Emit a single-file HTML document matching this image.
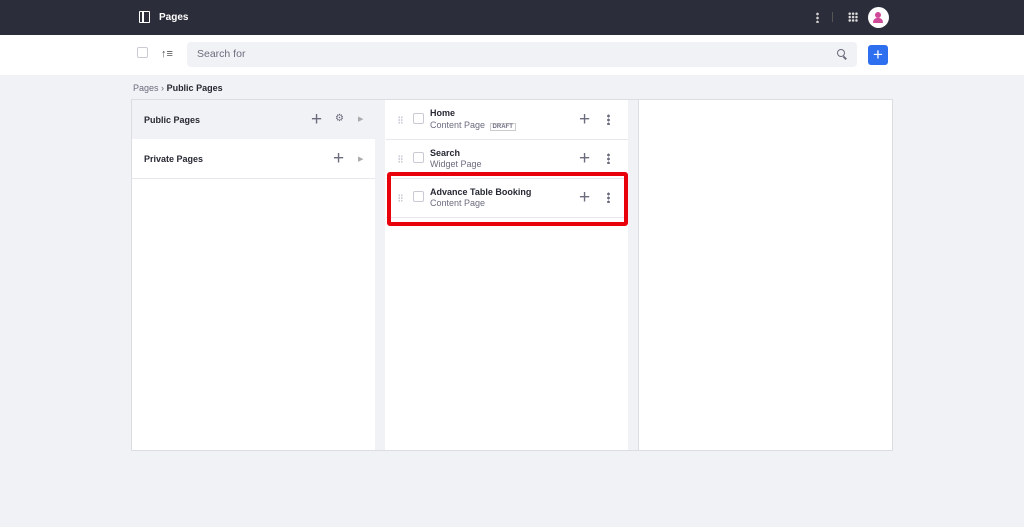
<!DOCTYPE html>
<html><head><style>
*{box-sizing:border-box;margin:0;padding:0}
body{width:1024px;height:527px;background:#f1f2f5;font-family:"Liberation Sans",sans-serif;position:relative;overflow:hidden;color:#272833}
.a{position:absolute}
.top{left:0;top:0;width:1024px;height:35px;background:#2c2d3a}
.tb{left:0;top:35px;width:1024px;height:40px;background:#fff}
.b{font-weight:bold}
.sm{font-size:9px}
.g{color:#6b6c7e}
.cb{width:11px;height:11px;border:1px solid #c9cad3;border-radius:2px;background:#fff}
.plus{font-size:19px;color:#6b6c7e;line-height:1}
.dots{width:3px;height:11px;background:radial-gradient(circle,#6b6c7e 1.3px,transparent 1.5px) 0 0/3px 4px repeat-y}
.drag{width:5px;height:8px;background:radial-gradient(circle,#c9cad3 0.8px,transparent 1px) 0 0/2.5px 2.7px}
</style></head><body>
<div class="a top"></div>
<div class="a" style="left:139px;top:11px;width:11px;height:12px;border:1.5px solid #fff;border-radius:1px"></div>
<div class="a" style="left:142px;top:11px;width:1.5px;height:12px;background:#fff"></div>
<div class="a b" style="left:159px;top:12px;color:#fff;font-size:10px">Pages</div>
<div class="a" style="left:816px;top:12px;width:3px;height:11px;background:radial-gradient(circle,#ccc 1.2px,transparent 1.5px) 0 0/3px 4px repeat-y"></div>
<div class="a" style="left:832px;top:12px;width:1px;height:10px;background:#555"></div>
<div class="a" style="left:848px;top:12px;width:10px;height:10px;background:radial-gradient(circle,#ddd 1.2px,transparent 1.4px) 0 0/3.4px 3.4px"></div>
<div class="a" style="left:868px;top:7px;width:21px;height:21px;border-radius:50%;background:#fff"></div>
<div class="a" style="left:875px;top:12px;width:6px;height:6px;border-radius:50%;background:#d04a9a"></div>
<div class="a" style="left:873px;top:18px;width:10px;height:5px;border-radius:5px 5px 1px 1px;background:#d04a9a"></div>
<div class="a tb"></div>
<div class="a cb" style="left:137px;top:47px"></div>
<div class="a" style="left:161px;top:48px;font-size:11px;color:#555">↑≡</div>
<div class="a" style="left:187px;top:42px;width:670px;height:25px;background:#f1f2f5;border-radius:4px"></div>
<div class="a g" style="left:197px;top:48px;font-size:10.5px">Search for</div>
<div class="a" style="left:837px;top:49px;width:8px;height:8px;border:1.5px solid #6b6c7e;border-radius:50%"></div>
<div class="a" style="left:843px;top:57px;width:4px;height:1.5px;background:#6b6c7e;transform:rotate(45deg)"></div>
<div class="a" style="left:868px;top:45px;width:20px;height:20px;background:#2e6ff0;border-radius:3px;color:#fff;text-align:center;font-size:17px;line-height:19px">+</div>
<div class="a" style="left:133px;top:83px;font-size:9px"><span class="g">Pages</span> <span class="g">›</span> <b>Public Pages</b></div>
<div class="a" style="left:131px;top:99px;width:762px;height:352px;background:#fff;border:1px solid #dcdde3"></div>
<div class="a" style="left:132px;top:100px;width:243px;height:39px;background:#f1f2f5"></div>
<div class="a" style="left:132px;top:178px;width:243px;height:1px;background:#e7e7ed"></div>
<div class="a" style="left:375px;top:100px;width:10px;height:350px;background:#f1f2f5"></div>
<div class="a" style="left:628px;top:100px;width:10px;height:350px;background:#f1f2f5"></div>
<div class="a" style="left:638px;top:100px;width:1px;height:350px;background:#dcdde3"></div>
<div class="a b" style="left:144px;top:115px;font-size:9px">Public Pages</div>
<div class="a plus" style="left:311px;top:110px">+</div>
<div class="a" style="left:335px;top:113px;font-size:10px;color:#6b6c7e">⚙</div>
<div class="a" style="left:358px;top:115px;font-size:7px;color:#aaa">▶</div>
<div class="a b" style="left:144px;top:154px;font-size:9px">Private Pages</div>
<div class="a plus" style="left:333px;top:149px">+</div>
<div class="a" style="left:358px;top:155px;font-size:7px;color:#aaa">▶</div>
<div class="a" style="left:386px;top:139px;width:242px;height:1px;background:#e7e7ed"></div>
<div class="a" style="left:386px;top:178px;width:242px;height:1px;background:#e7e7ed"></div>
<div class="a" style="left:386px;top:217px;width:242px;height:1px;background:#e7e7ed"></div>
<div class="a drag" style="left:398px;top:116px"></div>
<div class="a drag" style="left:398px;top:155px"></div>
<div class="a drag" style="left:398px;top:194px"></div>
<div class="a cb" style="left:413px;top:113px"></div>
<div class="a b sm" style="left:430px;top:108px">Home</div>
<div class="a g sm" style="left:430px;top:120px">Content Page <span style="font-size:6px;border:1px solid #ccc;padding:0 2px;margin-left:2px;font-weight:bold">DRAFT</span></div>
<div class="a plus" style="left:579px;top:110px">+</div><div class="a dots" style="left:607px;top:114px"></div>
<div class="a cb" style="left:413px;top:152px"></div>
<div class="a b sm" style="left:430px;top:148px">Search</div>
<div class="a g sm" style="left:430px;top:159px">Widget Page</div>
<div class="a plus" style="left:579px;top:149px">+</div><div class="a dots" style="left:607px;top:153px"></div>
<div class="a cb" style="left:413px;top:191px"></div>
<div class="a b sm" style="left:430px;top:187px">Advance Table Booking</div>
<div class="a g sm" style="left:430px;top:198px">Content Page</div>
<div class="a plus" style="left:579px;top:188px">+</div><div class="a dots" style="left:607px;top:192px"></div>
<div class="a" style="left:387px;top:172px;width:241px;height:54px;border:4px solid #e8000b;border-radius:3px"></div>
</body></html>
